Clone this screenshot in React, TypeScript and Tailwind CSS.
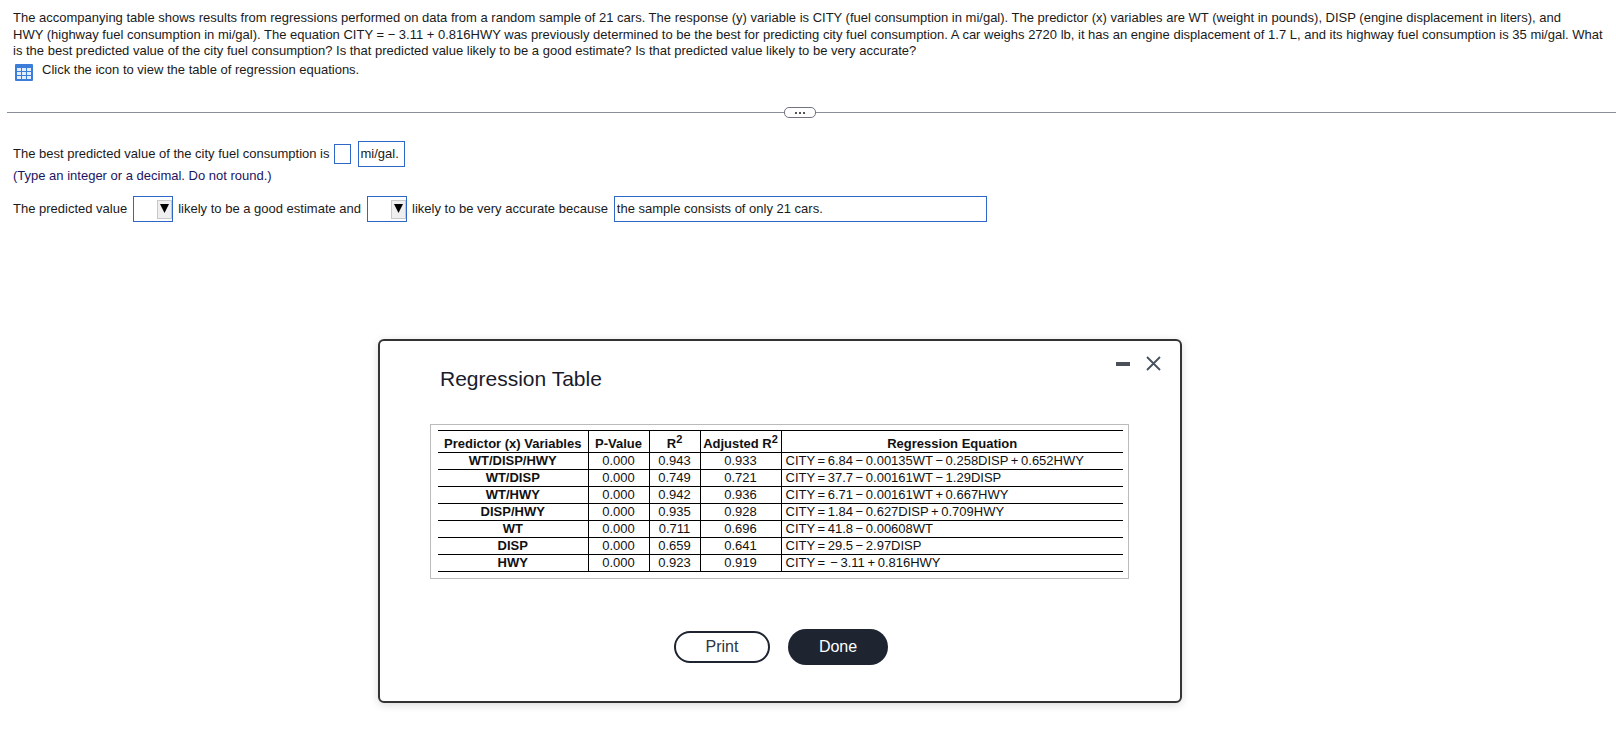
const font = "font-['Liberation_Sans',Arial,sans-serif]"

const rows = [
  ["WT/DISP/HWY", "0.000", "0.943", "0.933", "CITY = 6.84 − 0.00135WT − 0.258DISP + 0.652HWY"],
  ["WT/DISP", "0.000", "0.749", "0.721", "CITY = 37.7 − 0.00161WT − 1.29DISP"],
  ["WT/HWY", "0.000", "0.942", "0.936", "CITY = 6.71 − 0.00161WT + 0.667HWY"],
  ["DISP/HWY", "0.000", "0.935", "0.928", "CITY = 1.84 − 0.627DISP + 0.709HWY"],
  ["WT", "0.000", "0.711", "0.696", "CITY = 41.8 − 0.00608WT"],
  ["DISP", "0.000", "0.659", "0.641", "CITY = 29.5 − 2.97DISP"],
  ["HWY", "0.000", "0.923", "0.919", "CITY = \u00a0− 3.11 + 0.816HWY"],
]

function TableIcon() {
  return (
    <svg width="18" height="17" viewBox="0 0 18 17" className="shrink-0 mt-[2px]">
      <rect x="0" y="0" width="18" height="17" rx="1" fill="#3b7dd8" />
      <rect x="2" y="4" width="4" height="3" fill="#e4eefb" />
      <rect x="7" y="4" width="4" height="3" fill="#e4eefb" />
      <rect x="12" y="4" width="4" height="3" fill="#e4eefb" />
      <rect x="2" y="8" width="4" height="3" fill="#e4eefb" />
      <rect x="7" y="8" width="4" height="3" fill="#e4eefb" />
      <rect x="12" y="8" width="4" height="3" fill="#e4eefb" />
      <rect x="2" y="12" width="4" height="3" fill="#e4eefb" />
      <rect x="7" y="12" width="4" height="3" fill="#e4eefb" />
      <rect x="12" y="12" width="4" height="3" fill="#e4eefb" />
    </svg>
  )
}

function Dropdown() {
  return (
    <div className="w-[40px] h-[26px] border border-[#2f66c9] flex justify-end items-start shrink-0 bg-white">
      <div className="w-[15px] h-[19px] mt-[3px] bg-[#efefef] border border-[#c8c8c8] flex justify-center pt-[3px]">
        <svg width="9" height="9" viewBox="0 0 9 9">
          <path d="M0 0 H9 L4.5 9 Z" fill="#000" />
        </svg>
      </div>
    </div>
  )
}

export default function App() {
  return (
    <div className={`relative h-[744px] w-[1616px] overflow-hidden bg-white text-[13px] leading-[16px] text-[#1a1a1a] ${font}`}>
      <div className="pl-[13px] pt-[10px]">
        <p className="leading-[16.5px]">
          The accompanying table shows results from regressions performed on data from a random sample of 21 cars. The response (y) variable is CITY (fuel consumption in mi/gal). The predictor (x) variables are WT (weight in pounds), DISP (engine displacement in liters), and
          <br />
          HWY (highway fuel consumption in mi/gal). The equation CITY = − 3.11 + 0.816HWY was previously determined to be the best for predicting city fuel consumption. A car weighs 2720 lb, it has an engine displacement of 1.7 L, and its highway fuel consumption is 35 mi/gal. What
          <br />
          is the best predicted value of the city fuel consumption? Is that predicted value likely to be a good estimate? Is that predicted value likely to be very accurate?
        </p>
        <div className="flex items-start gap-[9px] mt-[2px] ml-[2px]">
          <TableIcon />
          <span className="leading-[16.5px] pb-[4px]">Click the icon to view the table of regression equations.</span>
        </div>
      </div>

      <div className="relative mt-[30px] ml-[7px] h-px bg-[#8a8e99]">
        <div className="absolute left-[777px] top-[-5px] w-[32px] h-[11px] rounded-[5px] border border-[#70747e] bg-white flex items-center justify-center gap-[2px]">
          <span className="w-[2px] h-[2px] bg-[#555]" />
          <span className="w-[2px] h-[2px] bg-[#555]" />
          <span className="w-[2px] h-[2px] bg-[#555]" />
        </div>
      </div>

      <div className="pl-[13px] mt-[28px]">
        <div className="flex items-center">
          <span>The best predicted value of the city fuel consumption is</span>
          <div className="ml-[4px] w-[17px] h-[20px] border border-[#2f66c9]" />
          <div className="ml-[7px] w-[47px] h-[26px] border border-[#2f66c9] pl-[2px] flex items-center">mi/gal.</div>
        </div>
        <p className="text-[#1b1464] mt-[1px]">(Type an integer or a decimal. Do not round.)</p>
        <div className="flex items-center mt-[12px]">
          <span>The predicted value</span>
          <div className="ml-[6px]"><Dropdown /></div>
          <span className="ml-[5px]">likely to be a good estimate and</span>
          <div className="ml-[6px]"><Dropdown /></div>
          <span className="ml-[5px]">likely to be very accurate because</span>
          <div className="ml-[6px] w-[373px] h-[26px] border border-[#2f66c9] pl-[2px] flex items-center">the sample consists of only 21 cars.</div>
        </div>
      </div>

      <div className="absolute left-[378px] top-[339px] w-[804px] h-[364px] bg-white border-2 border-[#333] rounded-[6px] shadow-[0_2px_8px_rgba(0,0,0,0.15)] flex flex-col">
        <div className="absolute right-[19px] top-[15px] flex items-center gap-[16px]">
          <div className="w-[14px] h-[4px] bg-[#4a4f58]" />
          <svg width="15" height="15" viewBox="0 0 15 15">
            <path d="M1 1 L14 14 M14 1 L1 14" stroke="#47505c" strokeWidth="1.8" fill="none" />
          </svg>
        </div>
        <h2 className="ml-[60px] mt-[26px] text-[21px] leading-[24px] text-[#1a1a2a]">Regression Table</h2>
        <div className="ml-[50px] mt-[33px] w-[699px] h-[155px] border border-[#bbb] pt-[5px] pl-[7px]">
          <table className="border-collapse text-[13px] leading-[16px] w-[685px] table-fixed text-[#111]">
            <colgroup>
              <col className="w-[150px]" />
              <col className="w-[61px]" />
              <col className="w-[51px]" />
              <col className="w-[81px]" />
              <col />
            </colgroup>
            <thead>
              <tr className="h-[22px] border-y border-black">
                <th className="font-bold text-center align-bottom">Predictor (x) Variables</th>
                <th className="font-bold text-center align-bottom border-l border-black">P-Value</th>
                <th className="font-bold text-center align-bottom border-l border-black">R<sup className="text-[11px] leading-none">2</sup></th>
                <th className="font-bold text-center align-bottom border-l border-black">Adjusted R<sup className="text-[11px] leading-none">2</sup></th>
                <th className="font-bold text-center align-bottom border-l border-black">Regression Equation</th>
              </tr>
            </thead>
            <tbody>
              {rows.map((r) => (
                <tr key={r[0]} className="h-[17px] border-b border-black">
                  <td className="font-bold text-center p-0">{r[0]}</td>
                  <td className="text-center p-0 border-l border-black">{r[1]}</td>
                  <td className="text-center p-0 border-l border-black">{r[2]}</td>
                  <td className="text-center p-0 border-l border-black">{r[3]}</td>
                  <td className="pl-[4px] p-0 border-l border-black [word-spacing:-1px]">{r[4]}</td>
                </tr>
              ))}
            </tbody>
          </table>
        </div>
        <div className="flex justify-center items-center gap-[18px] mt-[50px] ml-[2px]">
          <button className="w-[96px] h-[32px] rounded-full border-2 border-[#1e2430] text-[16px] text-[#2f3542] bg-white">Print</button>
          <button className="w-[100px] h-[36px] rounded-full bg-[#1e2430] text-[16px] text-white">Done</button>
        </div>
      </div>
    </div>
  )
}
